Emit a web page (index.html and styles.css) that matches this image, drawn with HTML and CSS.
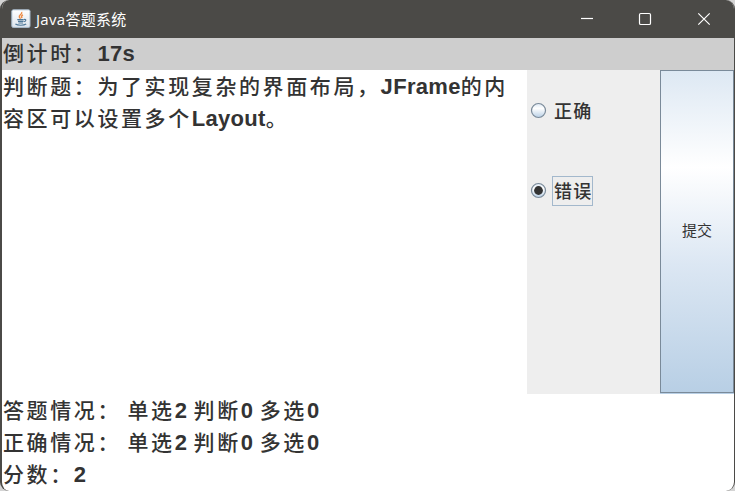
FILE: index.html
```html
<!DOCTYPE html>
<html lang="zh-CN">
<head>
<meta charset="utf-8">
<title>Java答题系统</title>
<link rel="stylesheet" href="styles.css">
</head>
<body>
<div class="window">
  <header class="titlebar">
    <svg class="app-icon" width="20" height="20" viewBox="0 0 20 20">
      <defs><linearGradient id="tile" x1="0" y1="0" x2="0" y2="1"><stop offset="0" stop-color="#fff"/><stop offset="1" stop-color="#dce4ec"/></linearGradient></defs>
      <rect x=".8" y=".8" width="18.2" height="17.6" rx="1.5" fill="url(#tile)" stroke="#a9bccd"/>
      <path d="M10.6 3c1.4 2-3.1 2.9-2.3 4.9.3.8 1 1.2 1.2 1.9M12 5.8c-2.5 1-1.4 2-1.1 3.3" fill="none" stroke="#ed8b45" stroke-width="1.4"/>
      <path d="M6.3 10.6h6.4M7 12.4h5.6M7.4 14h4.7M13 10.5c2.6-.6 2.2 1.8.1 2.2M4.4 15c2.3 1.7 8.4 1.6 10.8 0" fill="none" stroke="#4f7898" stroke-width="1.15"/>
    </svg>
    <h1 class="title"><span class="title-latin">Java</span>答题系统</h1>
    <svg class="control" width="58" height="38" viewBox="0 0 58 38"><path d="M23 18.5h12"/></svg>
    <svg class="control" width="58" height="38" viewBox="0 0 58 38"><rect x="23.5" y="13.5" width="11" height="11" rx="1.3"/></svg>
    <svg class="control" width="61" height="38" viewBox="0 0 61 38"><path d="M24.3 13.3l11.4 11.4M35.7 13.3L24.3 24.7"/></svg>
  </header>
  <div class="line timer">倒计时：<b>17s</b></div>
  <main class="content">
    <section class="question">
      <div class="line">判断题：为了实现复杂的界面布局，<b>JFrame</b>的内</div>
      <div class="line">容区可以设置多个<b>Layout</b>。</div>
    </section>
    <section class="options">
      <div class="option">
        <svg class="radio" width="16" height="16" viewBox="0 0 16 16">
          <defs><linearGradient id="ball" x1="0" y1="0" x2="0" y2="1"><stop offset="0" stop-color="#dde8f3"/><stop offset=".35" stop-color="#fff"/><stop offset="1" stop-color="#b8cfe5"/></linearGradient></defs>
          <circle cx="7.5" cy="7.5" r="7" fill="url(#ball)" stroke="#7a8a99" stroke-width="1.2"/>
        </svg>
        <span class="option-text">正确</span>
      </div>
      <div class="option">
        <svg class="radio" width="16" height="16" viewBox="0 0 16 16">
          <circle cx="7.5" cy="7.5" r="7" fill="url(#ball)" stroke="#7a8a99" stroke-width="1.2"/>
          <circle cx="7.5" cy="7.5" r="4.4" fill="#333"/>
        </svg>
        <span class="option-text focused">错误</span>
      </div>
    </section>
    <button class="submit">提交</button>
  </main>
  <footer class="stats">
    <div class="line">答题情况：<b> </b>单选<b>2 </b>判断<b>0 </b>多选<b>0</b></div>
    <div class="line">正确情况：<b> </b>单选<b>2 </b>判断<b>0 </b>多选<b>0</b></div>
    <div class="line">分数：<b>2</b></div>
  </footer>
</div>
</body>
</html>
```
FILE: styles.css
```css
* { box-sizing: border-box; }

body {
  margin: 0;
  background: #d4d4d4;
  color: #333;
  font-family: "Noto Sans CJK SC", sans-serif;
}

.window {
  display: flex;
  flex-direction: column;
  width: 735px;
  height: 491px;
  overflow: hidden;
  background: #fff;
  border: solid #4b4a47;
  border-width: 0 1px 0 2px;
  border-radius: 9px;
}

.titlebar {
  display: flex;
  flex: none;
  align-items: center;
  height: 38px;
  padding-left: 9px;
  margin-right: -1px;
  background: #4b4a47;
}

.title {
  flex: 1;
  margin: 0 0 0 5px;
  color: #fff;
  font-size: 15px;
  font-weight: 400;
  line-height: 36px;
  letter-spacing: 0.3px;
}

.title-latin {
  font-family: "Open Sans", sans-serif;
  font-size: 15px;
}

.control {
  fill: none;
  stroke: #fff;
  stroke-width: 1.2;
}

.line {
  height: 32px;
  padding-left: 1px;
  font-size: 21px;
  font-weight: 500;
  line-height: 31px;
  letter-spacing: 2.6px;
  white-space: pre;
}

.line b {
  font-family: "Liberation Sans", sans-serif;
  font-size: 22px;
  font-weight: 700;
  letter-spacing: 0.3px;
}

.timer {
  flex: none;
  line-height: 29px;
  background: #cecece;
}

.content {
  display: flex;
  flex: none;
  height: 324px;
}

.question {
  width: 525px;
}

.options {
  flex: 1;
  padding: 26px 0 0 4px;
  background: #eee;
}

.option {
  display: flex;
  align-items: center;
  height: 30px;
  margin-bottom: 50px;
}

.radio {
  overflow: visible;
}

.option-text {
  height: 30px;
  margin-left: 5px;
  padding-left: 1px;
  border: 1px solid transparent;
  font-size: 18px;
  font-weight: 500;
  line-height: 27px;
  letter-spacing: 1.2px;
}

.focused {
  border-color: #a3b8cc;
}

.submit {
  width: 74px;
  height: 323px;
  padding: 0 0 4px;
  border: 1px solid #7a8a99;
  background: linear-gradient(#dde8f3 0%, #fff 30%, #dce7f3 60%, #b8cfe5 100%);
  box-shadow: 0 1px #b8cfe5;
  color: #333;
  font: 15px "Noto Sans CJK SC", sans-serif;
}
```
